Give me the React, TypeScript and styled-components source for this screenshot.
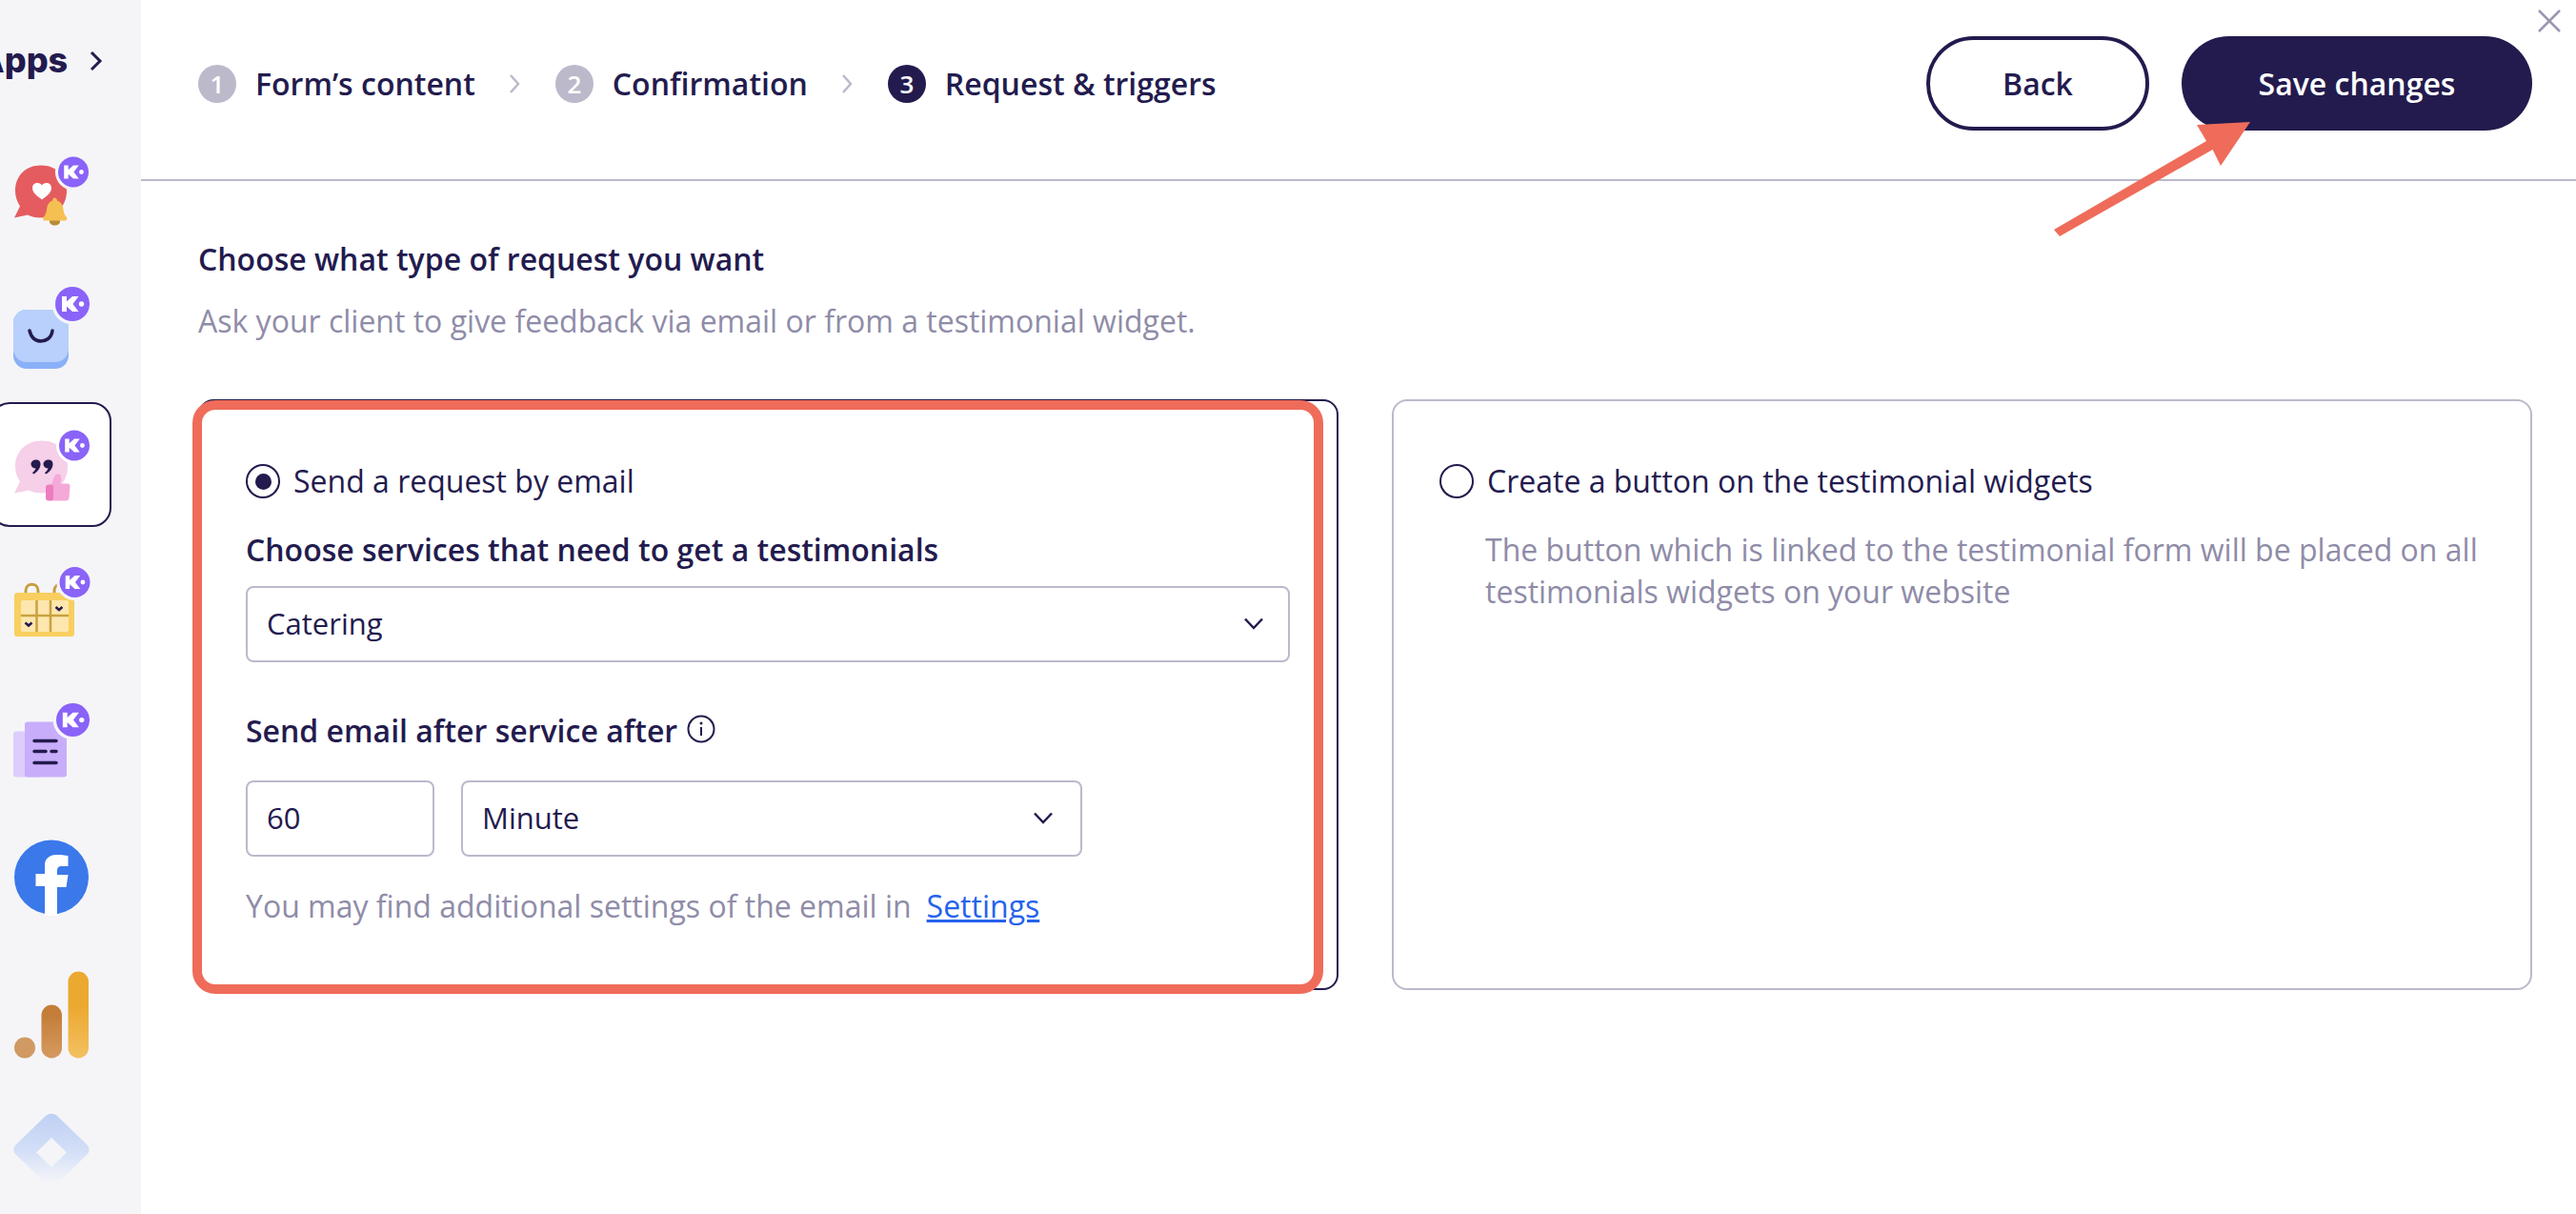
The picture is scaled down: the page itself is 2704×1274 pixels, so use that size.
import React from 'react';
import styled, { createGlobalStyle } from 'styled-components';

const NAVY = '#231b4e';
const GREY = '#bcb9cb';
const MUTED = '#8f8ca8';
const CORAL = '#ef6c5a';
const SIDE_BG = '#f5f5f8';

const GlobalStyle = createGlobalStyle`
  html, body {
    margin: 0;
    padding: 0;
    background: #fff;
    overflow: hidden;
  }
  * {
    box-sizing: border-box;
  }
  body {
    font-family: 'Open Sans', 'Liberation Sans', sans-serif;
    color: ${NAVY};
  }
`;

const Page = styled.div`
  position: relative;
  display: flex;
  width: 2704px;
  height: 1274px;
  overflow: hidden;
`;

const Sidebar = styled.aside`
  width: 148px;
  flex-shrink: 0;
  height: 100%;
  background: ${SIDE_BG};
  overflow: hidden;
`;

const AppsHeader = styled.div`
  height: 133px;
  padding-top: 42px;
  margin-left: -23px;
  display: flex;
  align-items: flex-start;
  gap: 24px;
`;

const AppsTitle = styled.span`
  font-family: Inter, 'Open Sans', sans-serif;
  font-size: 36px;
  line-height: 42px;
  font-weight: 800;
`;

const AppsChevron = styled.svg`
  width: 16px;
  height: 24px;
  margin-top: 10px;
  margin-left: -2px;
`;

const AppTile = styled.div<{ $active?: boolean }>`
  width: 127px;
  height: 131px;
  margin-left: -10px;
  margin-bottom: 13.5px;
  padding-left: 12.5px;
  display: flex;
  align-items: center;
  border-radius: 20px;
  border: 2.5px solid ${(p) => (p.$active ? NAVY : 'transparent')};
  background: ${(p) => (p.$active ? '#fff' : 'transparent')};
`;

const AppSvg = styled.svg`
  width: 100px;
  height: 100px;
  flex-shrink: 0;
  overflow: visible;
`;

const Main = styled.main`
  flex: 1;
  display: flex;
  flex-direction: column;
  min-width: 0;
`;

const Header = styled.header`
  height: 190px;
  flex-shrink: 0;
  padding: 38px 46px 0 60px;
  display: flex;
  justify-content: space-between;
  align-items: flex-start;
  border-bottom: 2px solid ${GREY};
`;

const Steps = styled.ol`
  list-style: none;
  margin: 30px 0 0;
  padding: 0;
  display: flex;
  align-items: center;
`;

const Step = styled.li`
  display: flex;
  align-items: center;
  font-size: 32px;
  line-height: 40px;
  font-weight: 600;
  white-space: nowrap;
`;

const StepNumber = styled.span<{ $current?: boolean }>`
  width: 40px;
  height: 40px;
  margin-right: 20px;
  border-radius: 50%;
  display: flex;
  align-items: center;
  justify-content: center;
  background: ${(p) => (p.$current ? NAVY : GREY)};
  color: #fff;
  font-size: 26px;
  font-weight: 600;
`;

const StepArrow = styled.svg`
  width: 12px;
  height: 22px;
  margin: 0 37px 0 35px;
`;

const Actions = styled.div`
  display: flex;
  gap: 34px;
`;

const BackButton = styled.button`
  width: 234px;
  height: 99px;
  border-radius: 50px;
  border: 4px solid ${NAVY};
  background: #fff;
  color: ${NAVY};
  font-family: inherit;
  font-size: 32px;
  font-weight: 600;
`;

const SaveButton = styled.button`
  width: 368px;
  height: 99px;
  border-radius: 50px;
  border: none;
  background: ${NAVY};
  color: #fff;
  font-family: inherit;
  font-size: 32px;
  font-weight: 600;
`;

const CloseIcon = styled.svg`
  position: absolute;
  top: 10px;
  left: 2664px;
  width: 24px;
  height: 24px;
`;

const Arrow = styled.svg`
  position: absolute;
  left: 0;
  top: 0;
  width: 2704px;
  height: 1274px;
  pointer-events: none;
`;

const Content = styled.section`
  padding: 61px 46px 0 60px;
`;

const Title = styled.h2`
  margin: 0;
  font-size: 32px;
  line-height: 42px;
  font-weight: 600;
`;

const Subtitle = styled.p`
  margin: 23px 0 0;
  font-size: 32px;
  line-height: 42px;
  color: ${MUTED};
`;

const Cards = styled.div`
  margin-top: 61px;
  display: grid;
  grid-template-columns: 1197px 1197px;
  gap: 56px;
`;

const Card = styled.div<{ $selected?: boolean }>`
  position: relative;
  height: 620px;
  padding: 63px 48px 0;
  border: 2px solid ${(p) => (p.$selected ? NAVY : GREY)};
  border-radius: 16px;
`;

const Highlight = styled.div`
  position: absolute;
  top: -1px;
  left: -8px;
  right: 14px;
  bottom: -6px;
  border: 10px solid ${CORAL};
  border-radius: 24px;
  pointer-events: none;
`;

const RadioRow = styled.label`
  display: flex;
  align-items: center;
  gap: 14px;
  font-size: 32px;
  line-height: 42px;
`;

const RadioMark = styled.span<{ $checked?: boolean }>`
  width: 36px;
  height: 36px;
  flex-shrink: 0;
  border-radius: 50%;
  border: 2px solid ${NAVY};
  display: flex;
  align-items: center;
  justify-content: center;

  &::after {
    content: '';
    display: ${(p) => (p.$checked ? 'block' : 'none')};
    width: 17px;
    height: 17px;
    border-radius: 50%;
    background: ${NAVY};
  }
`;

const FieldLabel = styled.div<{ $top: number }>`
  display: flex;
  align-items: center;
  gap: 10px;
  margin-top: ${(p) => p.$top}px;
  font-size: 32px;
  line-height: 42px;
  font-weight: 600;
`;

const InfoIcon = styled.svg`
  width: 30px;
  height: 30px;
  margin-top: -4px;
`;

const SelectBox = styled.div<{ $width: number }>`
  width: ${(p) => p.$width}px;
  height: 80px;
  padding: 0 25px 2px 20px;
  display: flex;
  align-items: center;
  justify-content: space-between;
  border: 2px solid ${GREY};
  border-radius: 8px;
  font-size: 31px;
  color: ${NAVY};
`;

const ServiceSelect = styled(SelectBox)`
  margin-top: 17px;
`;

const TimeRow = styled.div`
  margin-top: 31px;
  display: flex;
  gap: 28px;
`;

const NumberInput = styled.div`
  width: 198px;
  height: 80px;
  padding: 0 0 2px 20px;
  display: flex;
  align-items: center;
  border: 2px solid ${GREY};
  border-radius: 8px;
  font-size: 31px;
  color: ${NAVY};
`;

const UnitSelect = styled(SelectBox)`
  padding-right: 28px;
`;

const Hint = styled.p`
  margin: 31px 0 0;
  font-size: 32px;
  line-height: 42px;
  color: ${MUTED};
`;

const SettingsLink = styled.a`
  margin-left: 16px;
  color: #2563eb;
  text-decoration: underline;
`;

const Description = styled.p`
  margin: 29px 0 0 48px;
  font-size: 32px;
  line-height: 44px;
  color: ${MUTED};
`;

const KBadge: React.FC<{ cx: number; cy: number; r: number; halo?: string }> = ({
  cx,
  cy,
  r,
  halo = SIDE_BG,
}) => (
  <g transform={`translate(${cx} ${cy}) scale(${r / 18})`}>
    <circle r="21.5" fill={halo} />
    <circle r="18" fill="#8a63f8" />
    <path d="M-11-8h5v5.500L0-8h6.500l-6 8 6 8H0l-6-5.500V8h-5z" fill="#fff" />
    <circle cx="9.500" r="2.700" fill="#fff" />
  </g>
);

const FeedbackIcon = () => (
  <AppSvg viewBox="5 148.5 100 100">
    <path
      d="M43 173c16 0 27 11 27 27 0 16-12 28-28 28-5 0-9-1-13-3l-14 3 6-12c-3-5-5-10-5-16 0-16 11-27 27-27z"
      fill="#e45c5f"
    />
    <path
      d="M44 209c-4-3-10-7-10-12 0-6 7-7 10-3 3-4 10-3 10 3 0 5-6 9-10 12z"
      fill="#fff"
    />
    <path d="M52 230h11v2c0 2-2 4-5.500 4s-5.500-2-5.500-4z" fill="#b88c35" />
    <path
      d="M57.500 207c1.500 0 2.500 1.500 2.500 3 5 2 6 5.500 6.500 9.500.5 3.500 1.500 6 3.500 8 1 1.500 0 3.500-1.500 3.500H47c-1.500 0-2.500-2-1.500-3.500 2-2 3-4.500 3.500-8 .5-4 1.500-7.500 6-9.500 0-1.500 1-3 2.500-3z"
      fill="#f5c052"
    />
    <KBadge cx={77} cy={180} r={16} />
  </AppSvg>
);

const BagIcon = () => (
  <AppSvg viewBox="5 293 100 100">
    <rect x="14" y="325" width="58" height="62" rx="14" fill="#8ab0f8" />
    <rect x="14" y="325" width="58" height="55" rx="14" fill="#b8d0fb" />
    <path
      d="M31 347c2 8 7 11 12 11s11-3 12-11"
      fill="none"
      stroke={NAVY}
      strokeWidth="3.500"
      strokeLinecap="round"
    />
    <KBadge cx={76} cy={319} r={18} />
  </AppSvg>
);

const TestimonialIcon = () => (
  <AppSvg viewBox="5 437.5 100 100">
    <path
      d="M44 462c16 0 27 11 27 27 0 16-11 28-27 28-5 0-10-1-14-3l-15 3 6-12c-3-5-5-10-5-16 0-16 12-27 28-27z"
      fill="#f6cfe8"
    />
    <path
      d="M38 482c3 0 4.500 2 4.500 4.500 0 4-3 8.500-7.500 10.500l-1-1.500c2-1.500 3-3 3.500-4.500-3 0-5-2-5-4.500 0-2.500 2.500-4.500 5.500-4.500zM51 482c3 0 4.500 2 4.500 4.500 0 4-3 8.500-7.500 10.500l-1-1.500c2-1.500 3-3 3.500-4.500-3 0-5-2-5-4.500 0-2.500 2.500-4.500 5.500-4.500z"
      fill={NAVY}
    />
    <path
      d="M54 508l3-8c1-3.500 6-4 7-.5.500 2 .5 5-.5 7.500H71c1.500 0 2.500 1 2.500 3l-1 12c0 2-1.500 3-3.500 3H54z"
      fill="#f4a9d8"
    />
    <rect x="48" y="508" width="8" height="17" rx="3" fill="#ee7cbf" />
    <KBadge cx={78} cy={467} r={16} halo="#fff" />
  </AppSvg>
);

const CalendarIcon = () => (
  <AppSvg viewBox="5 582 100 100">
    <path
      d="M27 624v-4c0-9 13-9 13 0v4M57 624v-4c0-9 12-9 12 0v4"
      fill="none"
      stroke="#c79e3f"
      strokeWidth="3"
    />
    <rect x="15" y="622" width="63" height="46" rx="3" fill="#f8cf60" />
    <rect x="22" y="630" width="50" height="33" rx="2" fill="#fde7ae" />
    <path d="M22 646h50M38.500 630v33M53 630v33" stroke="#c9a23f" strokeWidth="2.500" />
    <path
      d="M58.500 637l3.500 3 3.500-3M26.500 653.500l3.500 3 3.500-3"
      fill="none"
      stroke={NAVY}
      strokeWidth="2.500"
    />
    <KBadge cx={78.5} cy={611} r={16} />
  </AppSvg>
);

const DocumentIcon = () => (
  <AppSvg viewBox="5 726.500 100 100">
    <rect x="14" y="767" width="30" height="48" rx="3" fill="#dccdfc" />
    <rect x="26" y="757" width="44" height="58" rx="3" fill="#c8aefa" />
    <path
      d="M36 777h23M36 788h12M54 788h5M36 800h23"
      stroke={NAVY}
      strokeWidth="3.500"
      strokeLinecap="round"
    />
    <KBadge cx={76.5} cy={755} r={17.5} />
  </AppSvg>
);

const FacebookIcon = () => (
  <AppSvg viewBox="5 871 100 100">
    <circle cx="54" cy="920.500" r="39" fill="#3b78ea" />
    <path
      d="M47 959.500V930h-9.500v-13H47v-9c0-7 5-11 12-11 5 0 9 .5 12.500 1v11H65c-4 0-5 2-5 5v4h11.500l-2 13H60v29.500q-6.500 1-13 0z"
      fill="#fff"
    />
  </AppSvg>
);

const AnalyticsIcon = () => (
  <AppSvg viewBox="5 1015.500 100 100">
    <defs>
      <linearGradient id="barTall" x1="0" y1="0" x2="0" y2="1">
        <stop offset="0.4" stopColor="#eba92f" />
        <stop offset="1" stopColor="#f3c062" />
      </linearGradient>
      <linearGradient id="barMid" x1="0" y1="0" x2="0" y2="1">
        <stop offset="0.2" stopColor="#c47e3a" />
        <stop offset="1" stopColor="#d69a60" />
      </linearGradient>
    </defs>
    <ellipse cx="26" cy="1099" rx="11" ry="11" fill="#d09a62" />
    <rect x="43.500" y="1054" width="21.500" height="56" rx="10.700" fill="url(#barMid)" />
    <rect x="71.500" y="1019" width="21.500" height="91" rx="10.700" fill="url(#barTall)" />
  </AppSvg>
);

const TagManagerIcon = () => (
  <AppSvg viewBox="5 1160 100 100">
    <defs>
      <linearGradient id="tagFade" gradientUnits="userSpaceOnUse" x1="0" y1="1168" x2="0" y2="1241">
        <stop offset="0" stopColor="#bfd0f4" />
        <stop offset="0.55" stopColor="#d3dff7" />
        <stop offset="1" stopColor={SIDE_BG} />
      </linearGradient>
    </defs>
    <path
      fillRule="evenodd"
      d="M48 1171a9 9 0 0 1 12 0l31 30a7 7 0 0 1 0 11l-31 30a9 9 0 0 1-12 0l-31-30a7 7 0 0 1 0-11zM54 1194l-16 15.500 16 15.500 16-15.500z"
      fill="url(#tagFade)"
    />
  </AppSvg>
);

const Chevron: React.FC = () => (
  <svg width="22" height="14" viewBox="0 0 22 14" fill="none">
    <path d="M2 2.500l9 9.500 9-9.500" stroke={NAVY} strokeWidth="2.500" />
  </svg>
);

const STEPS = ['Form’s content', 'Confirmation', 'Request & triggers'];

const App: React.FC = () => {
  return (
    <Page>
      <GlobalStyle />
      <Sidebar>
        <AppsHeader>
          <AppsTitle>Apps</AppsTitle>
          <AppsChevron viewBox="0 0 16 24" fill="none">
            <path d="M3 3l9 9-9 9" stroke={NAVY} strokeWidth="3" />
          </AppsChevron>
        </AppsHeader>
        <AppTile><FeedbackIcon /></AppTile>
        <AppTile><BagIcon /></AppTile>
        <AppTile $active><TestimonialIcon /></AppTile>
        <AppTile><CalendarIcon /></AppTile>
        <AppTile><DocumentIcon /></AppTile>
        <AppTile><FacebookIcon /></AppTile>
        <AppTile><AnalyticsIcon /></AppTile>
        <AppTile><TagManagerIcon /></AppTile>
      </Sidebar>

      <Main>
        <Header>
          <Steps>
            {STEPS.map((label, i) => (
              <Step key={label}>
                <StepNumber $current={i === 2}>{i + 1}</StepNumber>
                {label}
                {i < 2 && (
                  <StepArrow viewBox="0 0 12 22" fill="none">
                    <path d="M2 2l8 9-8 9" stroke={GREY} strokeWidth="2.500" />
                  </StepArrow>
                )}
              </Step>
            ))}
          </Steps>
          <Actions>
            <BackButton>Back</BackButton>
            <SaveButton>Save changes</SaveButton>
          </Actions>
        </Header>

        <Content>
          <Title>Choose what type of request you want</Title>
          <Subtitle>Ask your client to give feedback via email or from a testimonial widget.</Subtitle>

          <Cards>
            <Card $selected>
              <RadioRow>
                <RadioMark $checked />
                Send a request by email
              </RadioRow>
              <FieldLabel $top={30}>Choose services that need to get a testimonials</FieldLabel>
              <ServiceSelect $width={1096}>
                Catering
                <Chevron />
              </ServiceSelect>
              <FieldLabel $top={51}>
                Send email after service after
                <InfoIcon viewBox="0 0 30 30" fill="none">
                  <circle cx="15" cy="15" r="13.500" stroke={NAVY} strokeWidth="2" />
                  <path d="M15 13v9" stroke={NAVY} strokeWidth="2" />
                  <circle cx="15" cy="9" r="1.500" fill={NAVY} />
                </InfoIcon>
              </FieldLabel>
              <TimeRow>
                <NumberInput>60</NumberInput>
                <UnitSelect $width={652}>
                  Minute
                  <Chevron />
                </UnitSelect>
              </TimeRow>
              <Hint>
                You may find additional settings of the email in
                <SettingsLink href="#">Settings</SettingsLink>
              </Hint>
              <Highlight />
            </Card>

            <Card>
              <RadioRow>
                <RadioMark />
                Create a button on the testimonial widgets
              </RadioRow>
              <Description>
                The button which is linked to the testimonial form will be placed on all
                testimonials widgets on your website
              </Description>
            </Card>
          </Cards>
        </Content>
      </Main>

      <CloseIcon viewBox="0 0 24 24" fill="none">
        <path d="M1 1l22 22M23 1L1 23" stroke="#9a98b0" strokeWidth="2.500" />
      </CloseIcon>

      <Arrow viewBox="0 0 2704 1274">
        <polygon
          points="2156,241 2316,148 2306,131 2362,128 2331,174 2322.600,157 2162,248"
          fill={CORAL}
        />
      </Arrow>
    </Page>
  );
};

export default App;
